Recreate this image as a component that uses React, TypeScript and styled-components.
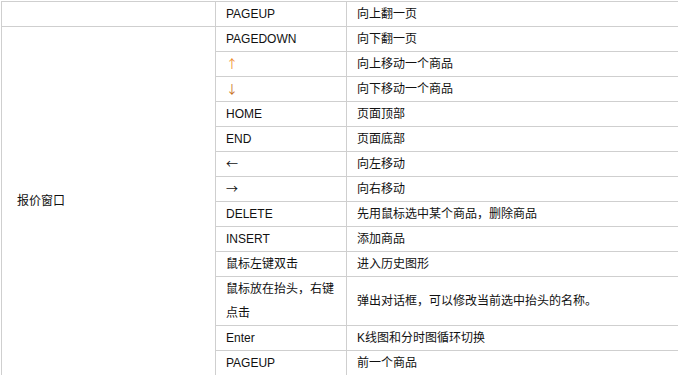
import React from "react";
import styled, { createGlobalStyle } from "styled-components";

interface KeyRow {
  key: string;
  action: string;
  arrow?: "up" | "down" | "side";
}

// shortcut list for the quote window
const quoteWindowKeys: KeyRow[] = [
  { key: "PAGEDOWN", action: "向下翻一页" },
  { key: "↑", action: "向上移动一个商品", arrow: "up" },
  { key: "↓", action: "向下移动一个商品", arrow: "down" },
  { key: "HOME", action: "页面顶部" },
  { key: "END", action: "页面底部" },
  { key: "←", action: "向左移动", arrow: "side" },
  { key: "→", action: "向右移动", arrow: "side" },
  { key: "DELETE", action: "先用鼠标选中某个商品，删除商品" },
  { key: "INSERT", action: "添加商品" },
  { key: "鼠标左键双击", action: "进入历史图形" },
  { key: "鼠标放在抬头，右键点击", action: "弹出对话框，可以修改当前选中抬头的名称。" },
  { key: "Enter", action: "K线图和分时图循环切换" },
  { key: "PAGEUP", action: "前一个商品" },
];

const GlobalStyle = createGlobalStyle`
  html, body {
    margin: 0;
    padding: 0;
    background: #fff;
    overflow: hidden;
  }
`;

const Wrapper = styled.div`
  width: 678px;
  padding: 1px 0 0 1px;
  box-sizing: border-box;
  overflow: hidden;
`;

const Table = styled.table`
  border-collapse: collapse;
  table-layout: fixed;
  width: 690px;
  font-family: "Liberation Sans", Arial, "Noto Sans CJK SC", sans-serif;
  font-size: 12px;
  color: #111;
`;

const Cell = styled.td`
  border: 1px solid #cfcfcf;
  padding: 0 10px;
  height: 24px;
  line-height: 24px;
  vertical-align: middle;
  word-break: break-all;
`;

const GroupCell = styled(Cell)`
  padding-left: 15px;
`;

const ArrowText = styled.span<{ $kind: "up" | "down" | "side" }>`
  display: inline-block;
  font-family: "Noto Sans CJK SC", sans-serif;
  font-size: 12px;
  line-height: 12px;
  vertical-align: -1px;
  color: ${(p) =>
    p.$kind === "up" ? "#f08a2c" : p.$kind === "down" ? "#c8701e" : "#111"};
`;

const App: React.FC = () => {
  return (
    <>
      <GlobalStyle />
      <Wrapper>
        <Table>
          <colgroup>
            <col style={{ width: 214 }} />
            <col style={{ width: 131 }} />
            <col />
          </colgroup>
          <tbody>
            <tr>
              <Cell />
              <Cell>PAGEUP</Cell>
              <Cell>向上翻一页</Cell>
            </tr>
            {quoteWindowKeys.map((row, i) => (
              <tr key={i}>
                {i === 0 && (
                  <GroupCell rowSpan={quoteWindowKeys.length}>报价窗口</GroupCell>
                )}
                <Cell>
                  {row.arrow ? (
                    <ArrowText $kind={row.arrow}>{row.key}</ArrowText>
                  ) : (
                    row.key
                  )}
                </Cell>
                <Cell>{row.action}</Cell>
              </tr>
            ))}
          </tbody>
        </Table>
      </Wrapper>
    </>
  );
};

export default App;
